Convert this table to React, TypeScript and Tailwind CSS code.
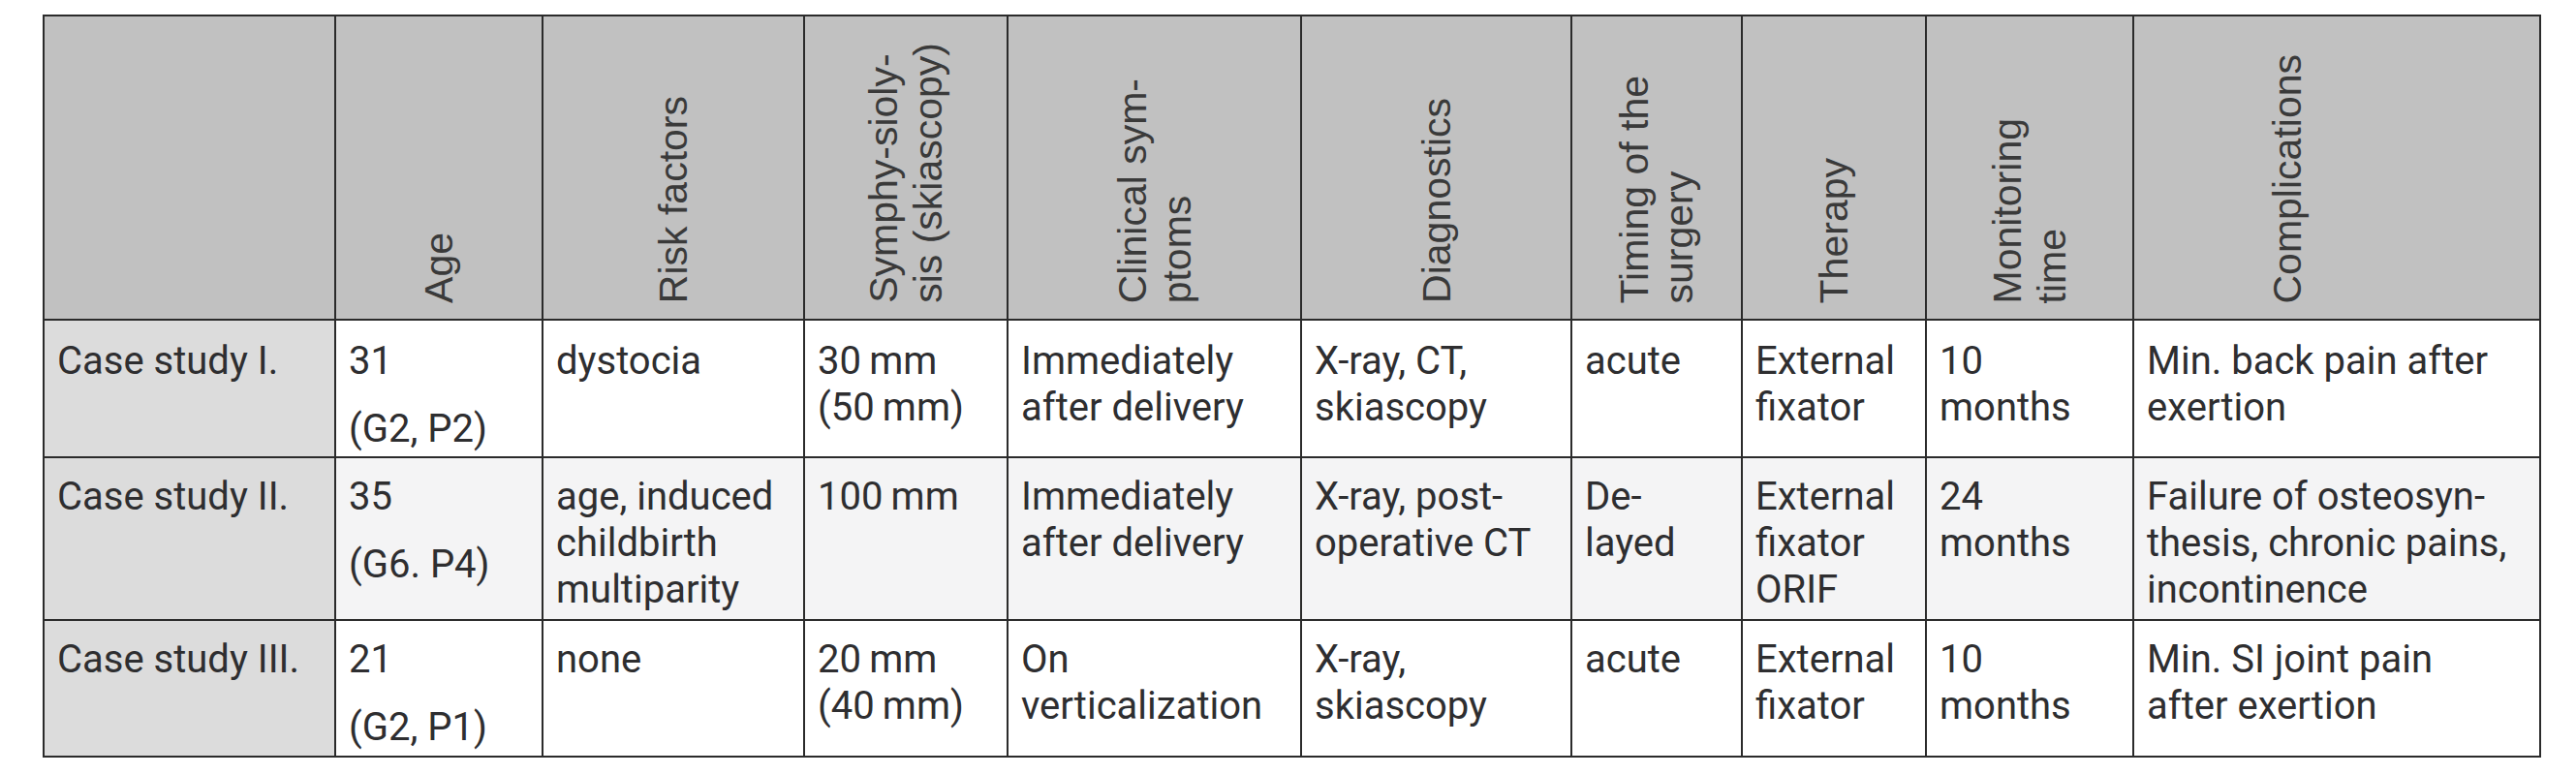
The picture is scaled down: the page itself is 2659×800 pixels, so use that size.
import React from 'react';

type Cell = string[] | { paras: string[] };

const HEADERS: { lines: string[]; shift?: string }[] = [
  { lines: [] },
  { lines: ['Age'] },
  { lines: ['Risk factors'] },
  { lines: ['Symphy-sioly-', 'sis (skiascopy)'] },
  { lines: ['Clinical sym-', 'ptoms'] },
  { lines: ['Diagnostics'] },
  { lines: ['Timing of the', 'surgery'] },
  { lines: ['Therapy'] },
  { lines: ['Monitoring', 'time'] },
  { lines: ['Complications'], shift: 'mr-[102px]' },
];

const ROWS: { cells: Cell[]; bg: string; pt: string }[] = [
  {
    bg: 'bg-white',
    pt: 'pt-[18px]',
    cells: [
      ['Case study I.'],
      { paras: ['31', '(G2, P2)'] },
      ['dystocia'],
      ['30\u2009mm', '(50\u2009mm)'],
      ['Immediately', 'after delivery'],
      ['X-ray, CT,', 'skiascopy'],
      ['acute'],
      ['External', 'fixator'],
      ['10', 'months'],
      ['Min. back pain after', 'exertion'],
    ],
  },
  {
    bg: 'bg-[#f4f4f5]',
    pt: 'pt-[16px]',
    cells: [
      ['Case study II.'],
      { paras: ['35', '(G6. P4)'] },
      ['age, induced', 'childbirth', 'multiparity'],
      ['100\u2009mm'],
      ['Immediately', 'after delivery'],
      ['X-ray, post-', 'operative CT'],
      ['De-', 'layed'],
      ['External', 'fixator', 'ORIF'],
      ['24', 'months'],
      ['Failure of osteosyn-', 'thesis, chronic pains,', 'incontinence'],
    ],
  },
  {
    bg: 'bg-white',
    pt: 'pt-[16px]',
    cells: [
      ['Case study III.'],
      { paras: ['21', '(G2, P1)'] },
      ['none'],
      ['20\u2009mm', '(40\u2009mm)'],
      ['On', 'verticalization'],
      ['X-ray,', 'skiascopy'],
      ['acute'],
      ['External', 'fixator'],
      ['10', 'months'],
      ['Min. SI joint pain', 'after exertion'],
    ],
  },
];

const CellBody: React.FC<{ cell: Cell }> = ({ cell }) => {
  if (Array.isArray(cell)) {
    return (
      <div>
        {cell.map((l, i) => (
          <div key={i} className="whitespace-nowrap">{l}</div>
        ))}
      </div>
    );
  }
  return (
    <div>
      {cell.paras.map((p, i) => (
        <p key={i} className={`whitespace-nowrap ${i > 0 ? 'mt-[22px]' : ''}`}>{p}</p>
      ))}
    </div>
  );
};

export default function App() {
  return (
    <div className="min-h-screen w-full bg-white">
      <div className="pl-[44px] pt-[15px]">
        <div className="grid w-fit grid-cols-[301px_214px_270px_210px_303px_279px_176px_190px_214px_420px] grid-rows-[314px_142px_168px_141px] border-t-2 border-l-2 border-[#2b2b2b]">
          {HEADERS.map((h, i) => (
            <div
              key={i}
              className="flex items-end justify-center border-r-2 border-b-2 border-[#2b2b2b] bg-[#c1c1c1] pb-[16px]"
            >
              {h.lines.length > 0 && (
                <div
                  className={`rotate-180 [writing-mode:vertical-rl] font-['Liberation_Sans',Arial,sans-serif] text-[41px] leading-[46px] text-[#3a3a3a] whitespace-nowrap ${h.shift ?? ''}`}
                >
                  {h.lines.map((l, j) => (
                    <div key={j}>{l}</div>
                  ))}
                </div>
              )}
            </div>
          ))}
          {ROWS.map((row, r) =>
            row.cells.map((cell, c) => (
              <div
                key={`${r}-${c}`}
                className={`border-r-2 border-b-2 border-[#2b2b2b] pl-[13px] ${row.pt} ${
                  c === 0 ? 'bg-[#dcdcdc]' : row.bg
                } font-['Roboto',sans-serif] text-[40px] leading-[48px] text-[#2e2e30]`}
              >
                <CellBody cell={cell} />
              </div>
            ))
          )}
        </div>
      </div>
    </div>
  );
}
